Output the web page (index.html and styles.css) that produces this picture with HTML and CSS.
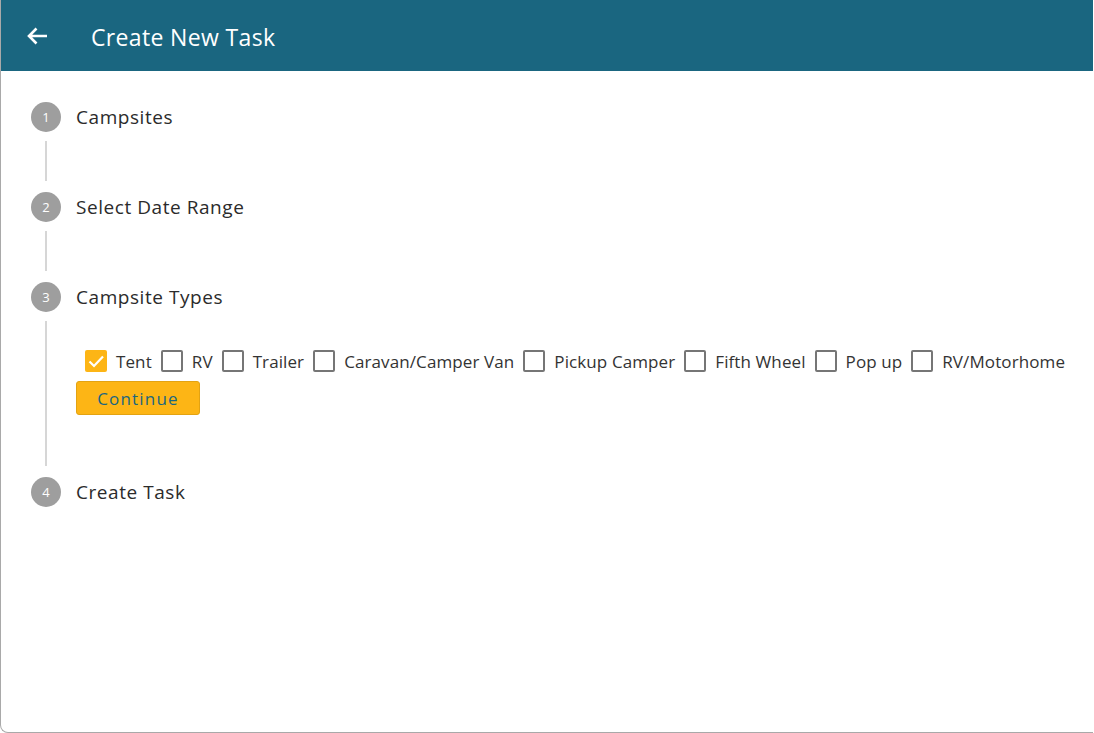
FILE: index.html
```html
<!DOCTYPE html>
<html lang="en">
<head>
<meta charset="utf-8">
<title>Create New Task</title>
<link rel="stylesheet" href="styles.css">
</head>
<body>
<div class="window">
  <header class="appbar">
    <button class="back" aria-label="Back">
      <svg width="22" height="18" viewBox="0 0 22 18"><path d="M21 9H3M10.5 1.5L3 9l7.5 7.5" fill="none" stroke="#fff" stroke-width="2.6" stroke-linecap="butt" stroke-linejoin="miter"/></svg>
    </button>
    <h1 class="title">Create New Task</h1>
  </header>
  <main class="stepper">
    <section class="step">
      <div class="step-head"><span class="num">1</span><span class="label">Campsites</span></div>
      <div class="step-body"></div>
    </section>
    <section class="step">
      <div class="step-head"><span class="num">2</span><span class="label">Select Date Range</span></div>
      <div class="step-body"></div>
    </section>
    <section class="step">
      <div class="step-head"><span class="num">3</span><span class="label">Campsite Types</span></div>
      <div class="step-body open">
        <div class="types">
          <label class="opt"><span class="box checked"><svg width="22" height="22" viewBox="0 0 22 22"><path d="M4.5 11.5l4.5 4.5 9-9.5" fill="none" stroke="#fff" stroke-width="2.2"/></svg></span><span>Tent</span></label>
          <label class="opt"><span class="box"></span><span>RV</span></label>
          <label class="opt"><span class="box"></span><span>Trailer</span></label>
          <label class="opt"><span class="box"></span><span>Caravan/Camper Van</span></label>
          <label class="opt"><span class="box"></span><span>Pickup Camper</span></label>
          <label class="opt"><span class="box"></span><span>Fifth Wheel</span></label>
          <label class="opt"><span class="box"></span><span>Pop up</span></label>
          <label class="opt"><span class="box"></span><span>RV/Motorhome</span></label>
        </div>
        <button class="continue">Continue</button>
      </div>
    </section>
    <section class="step">
      <div class="step-head"><span class="num">4</span><span class="label">Create Task</span></div>
    </section>
  </main>
</div>
</body>
</html>
```
FILE: styles.css
```css
html, body {
  margin: 0;
  padding: 0;
  background: #fff;
}
body {
  font-family: "Segoe UI", "Open Sans", "Noto Sans", sans-serif;
  color: #2b2b2b;
}
.window {
  width: 1093px;
  height: 733px;
  box-sizing: border-box;
  border-left: 1px solid #a9a9a9;
  border-bottom: 1px solid #a9a9a9;
  border-bottom-left-radius: 8px;
  overflow: hidden;
}
.appbar {
  height: 71px;
  background: #1a6680;
  display: flex;
  align-items: center;
}
.back {
  background: none;
  border: 0;
  padding: 0;
  margin-left: 25px;
  width: 22px;
  height: 18px;
  display: flex;
  cursor: pointer;
}
.title {
  margin: 3px 0 0 43px;
  font-size: 23px;
  font-weight: 400;
  color: #fff;
  letter-spacing: 0.35px;
}
.stepper {
  padding: 31px 0 0 30px;
}
.step-head {
  display: flex;
  align-items: center;
  height: 30px;
}
.num {
  width: 30px;
  height: 30px;
  border-radius: 50%;
  background: #9e9e9e;
  color: #fff;
  font-size: 13px;
  display: flex;
  align-items: center;
  justify-content: center;
}
.label {
  margin-left: 15px;
  font-size: 19px;
  color: #2b2b2b;
  letter-spacing: 0.55px;
}
.step-body {
  margin: 9px 0 11px 14px;
  border-left: 2px solid #d6d6d6;
  height: 40px;
}
.step-body.open {
  height: auto;
  padding: 28px 0 51px 29px;
}
.types {
  display: flex;
  align-items: center;
  height: 24px;
  margin-left: 9px;
}
.opt {
  display: flex;
  align-items: center;
  font-size: 17px;
  letter-spacing: 0.1px;
  color: #333;
  margin-right: 9px;
}
.box {
  width: 22px;
  height: 22px;
  box-sizing: border-box;
  border: 2px solid #767676;
  border-radius: 2px;
  margin-right: 9px;
  display: flex;
}
.box.checked {
  border: 0;
  background: #fdb515;
}
.continue {
  margin-top: 8px;
  width: 124px;
  height: 34px;
  background: #fdb515;
  border: 1px solid #e3a312;
  border-radius: 3px;
  font-family: inherit;
  font-size: 17px;
  color: #1a6680;
  letter-spacing: 1.2px;
  padding: 0;
  cursor: pointer;
}
```
